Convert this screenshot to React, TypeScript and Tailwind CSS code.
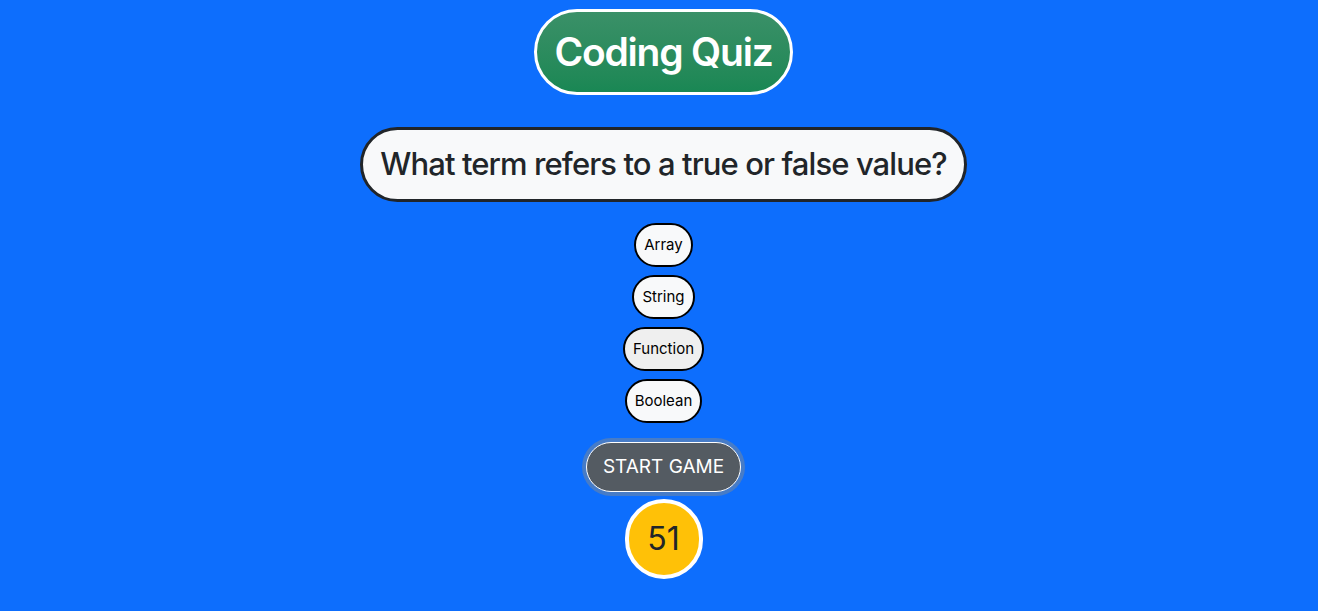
import React from 'react';

const answers = ['Array', 'String', 'Function', 'Boolean'];

const App: React.FC = () => {
  return (
    <div
      className="min-h-[611px] w-full bg-[#0d6efd] flex flex-col items-center pt-[9px] pl-[9px]"
      style={{ fontFamily: 'Inter, "Liberation Sans", sans-serif' }}
    >
      <h1 className="h-[86px] px-[17px] flex items-center rounded-full border-[3px] border-white bg-gradient-to-b from-[#3a9068] to-[#198754] text-white text-[39px] font-semibold tracking-[-1.2px]">
        Coding Quiz
      </h1>

      <h2 className="mt-[32px] h-[75px] px-[17px] flex items-center rounded-full border-[3px] border-[#212529] bg-[#f8f9fa] text-[#212529] text-[31px] font-medium tracking-[-0.9px]">
        What term refers to a true or false value?
      </h2>

      <div className="mt-[21px] flex flex-col items-center gap-2">
        {answers.map((a) => (
          <button
            key={a}
            className={`h-[44px] px-[8px] rounded-full border-2 border-black text-black text-[15px] ${
              a === 'Function' ? 'bg-[#efefef]' : 'bg-[#f8f9fa]'
            }`}
          >
            {a}
          </button>
        ))}
      </div>

      <button className="mt-[19px] h-[50px] px-[16px] rounded-full border border-white bg-[#545b62] text-white text-[19px] shadow-[0_0_0_4px_rgba(130,138,145,0.5)]">
        START GAME
      </button>

      <div className="mt-[7px] w-[78px] h-[80px] rounded-full border-[4px] border-white bg-[#ffc107] flex items-center justify-center text-[#212529] text-[32px]">
        51
      </div>
    </div>
  );
};

export default App;
